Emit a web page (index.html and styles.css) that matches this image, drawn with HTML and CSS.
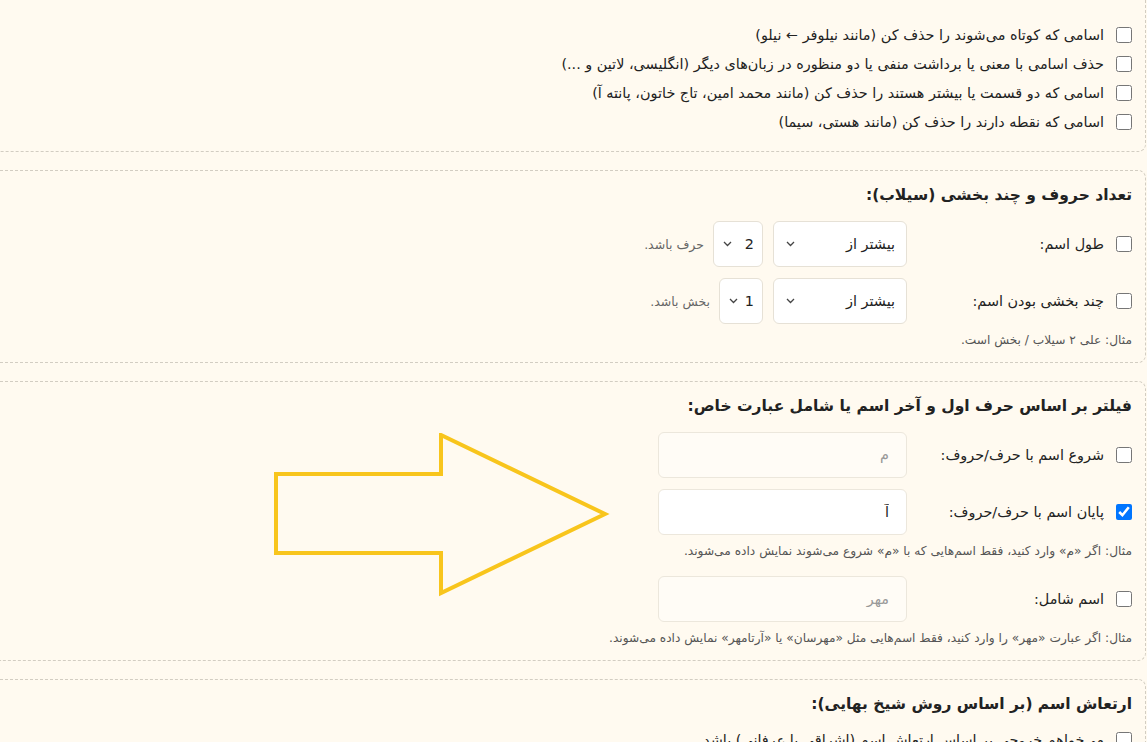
FILE: index.html
```html
<!DOCTYPE html>
<html lang="fa" dir="rtl">
    <head>
        <meta charset="UTF-8"/>
        <meta name="viewport" content="width=device-width, initial-scale=1.0"/>
        <title>فیلتر اسامی</title>
        <link rel="stylesheet" href="styles.css">
    </head>
    <body>
        <div class="page">
            <!-- بخش حذف اسامی -->
            <div class="box box-cut">
                <label class="check"><input type="checkbox"><span>اسامی که کوتاه می‌شوند را حذف کن (مانند نیلوفر ← نیلو)</span></label>
                <label class="check"><input type="checkbox"><span>حذف اسامی با معنی یا برداشت منفی یا دو منظوره در زبان‌های دیگر (انگلیسی، لاتین و ...)</span></label>
                <label class="check"><input type="checkbox"><span>اسامی که دو قسمت یا بیشتر هستند را حذف کن (مانند محمد امین، تاج خاتون، پانته آ)</span></label>
                <label class="check"><input type="checkbox"><span>اسامی که نقطه دارند را حذف کن (مانند هستی، سیما)</span></label>
            </div>

            <!-- تعداد حروف -->
            <div class="box">
                <h3 class="title">تعداد حروف و چند بخشی (سیلاب):</h3>
                <div class="row">
                    <input type="checkbox">
                    <span class="label">طول اسم:</span>
                    <div class="ctrls">
                        <div class="sel sel-wide"><span>بیشتر از</span><svg width="9" height="6" viewBox="0 0 9 6"><path d="M1 1l3.5 3.5L8 1" fill="none" stroke="#444" stroke-width="1.3"/></svg></div>
                        <div class="sel sel-num"><span>2</span><svg width="9" height="6" viewBox="0 0 9 6"><path d="M1 1l3.5 3.5L8 1" fill="none" stroke="#444" stroke-width="1.3"/></svg></div>
                        <span class="unit">حرف باشد.</span>
                    </div>
                </div>
                <div class="row">
                    <input type="checkbox">
                    <span class="label">چند بخشی بودن اسم:</span>
                    <div class="ctrls">
                        <div class="sel sel-wide"><span>بیشتر از</span><svg width="9" height="6" viewBox="0 0 9 6"><path d="M1 1l3.5 3.5L8 1" fill="none" stroke="#444" stroke-width="1.3"/></svg></div>
                        <div class="sel sel-num sel-small"><span>1</span><svg width="9" height="6" viewBox="0 0 9 6"><path d="M1 1l3.5 3.5L8 1" fill="none" stroke="#444" stroke-width="1.3"/></svg></div>
                        <span class="unit">بخش باشد.</span>
                    </div>
                </div>
                <p class="hint">مثال: علی ۲ سیلاب / بخش است.</p>
            </div>

            <!-- فیلتر حرف اول و آخر -->
            <div class="box">
                <h3 class="title">فیلتر بر اساس حرف اول و آخر اسم یا شامل عبارت خاص:</h3>
                <div class="row">
                    <input type="checkbox">
                    <span class="label">شروع اسم با حرف/حروف:</span>
                    <input type="text" class="txt" placeholder="م">
                </div>
                <div class="row">
                    <input type="checkbox" checked>
                    <span class="label">پایان اسم با حرف/حروف:</span>
                    <input type="text" class="txt filled" value="آ">
                </div>
                <p class="hint">مثال: اگر «م» وارد کنید، فقط اسم‌هایی که با «م» شروع می‌شوند نمایش داده می‌شوند.</p>
                <div class="row row-after">
                    <input type="checkbox">
                    <span class="label">اسم شامل:</span>
                    <input type="text" class="txt" placeholder="مهر">
                </div>
                <p class="hint">مثال: اگر عبارت «مهر» را وارد کنید، فقط اسم‌هایی مثل «مهرسان» یا «آرتامهر» نمایش داده می‌شوند.</p>
            </div>

            <!-- ارتعاش اسم -->
            <div class="box">
                <h3 class="title">ارتعاش اسم (بر اساس روش شیخ بهایی):</h3>
                <label class="check"><input type="checkbox"><span>می‌خواهم خروجی بر اساس ارتعاش اسم (اشراقی یا عرفانی) باشد</span></label>
            </div>
        </div>

        <svg class="arrow" width="340" height="170" viewBox="0 0 340 170">
            <polygon points="4,41 169,41 169,2 333,81 169,160 169,120 4,120" fill="none" stroke="#f8c51c" stroke-width="4" stroke-linejoin="miter"/>
        </svg>
    </body>
</html>
```

FILE: styles.css
```css
*{margin: 0px; padding: 0px; box-sizing: border-box}
body{background-color: #fffaf0; font-family: "DejaVu Sans", sans-serif; color: #222; font-size: 14.4px; overflow: hidden; position: relative;}

.page{display: flex; flex-direction: column; gap: 18px; padding-right: 1px;}
.box{border: 1px dashed #d2cdc2; border-left: none; border-radius: 0 8px 8px 0; padding: 11px 13px 13px 0; display: flex; flex-direction: column;}
.box-cut{border-top: none; border-top-right-radius: 0; padding-top: 25px; padding-bottom: 19px; gap: 9px;}

.title{font-size: 15.5px; font-weight: bold; line-height: 26px; margin-bottom: 13px;}

.check{display: flex; align-items: center; gap: 12px; line-height: 20px;}
input[type=checkbox]{width: 16px; height: 16px; margin: 0; flex: none;}

.row{display: flex; align-items: center; margin-bottom: 11px;}
.row .label{width: 209px; padding-right: 12px; flex: none;}
.row-after{margin-top: 16px;}
.ctrls{display: flex; align-items: center; gap: 10px;}

.sel{height: 46px; background: #fff; border: 1px solid #e6e1d6; border-radius: 6px; display: flex; align-items: center; justify-content: space-between; padding: 0 11px 0 12px;}
.sel-wide{width: 134px;}
.sel-num{width: 50px; padding: 0 8px 0 9px;}
.sel-small{width: 44px;}
.unit{font-size: 12.5px; color: #666; margin-right: -1px;}

.txt{width: 249px; height: 46px; border: 1px solid #ece7dc; border-radius: 6px; background: #fffcf6; padding: 0 17px; font-family: inherit; font-size: 14.4px; color: #222; outline: none;}
.txt::placeholder{color: #999;}
.txt.filled{background: #fff;}

.hint{font-size: 12.2px; color: #555; line-height: 18px; margin-top: -4px;}

.arrow{position: absolute; left: 272px; top: 433px;}
```
